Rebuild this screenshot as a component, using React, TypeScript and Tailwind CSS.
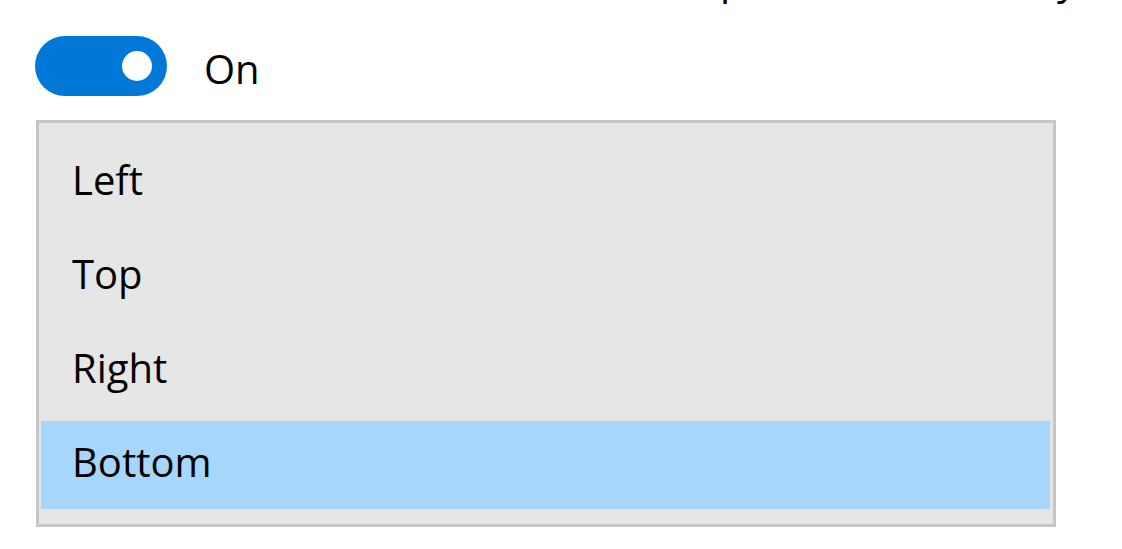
import { useState } from "react";

const sides = ["Left", "Top", "Right", "Bottom"];

export default function App() {
  const [on, setOn] = useState(true);
  const [selected, setSelected] = useState("Bottom");

  return (
    <div className="min-h-[549px] bg-white text-black font-['Open_Sans','Noto_Sans',sans-serif]">
      {/* clipped caption line from the section above */}
      <div className="h-[6px] overflow-hidden">
        <div className="-mt-[48px] flex whitespace-nowrap text-[40px] leading-[54px]">
          <span className="w-[696px] shrink-0" />
          <span>open</span>
          <span className="w-[180px] shrink-0" />
          <span>ready</span>
        </div>
      </div>

      <div className="flex items-center gap-[37px] pl-[35px] pt-[30px]">
        <button
          onClick={() => setOn(!on)}
          className={`flex h-[60px] w-[132px] items-center rounded-full px-[15px] ${
            on ? "justify-end bg-[#0078d7]" : "justify-start border-2 border-black bg-white"
          }`}
        >
          <span className={`h-[30px] w-[30px] rounded-full ${on ? "bg-white" : "bg-black"}`} />
        </button>
        <span className="pt-[5px] text-[40px] leading-[54px]">{on ? "On" : "Off"}</span>
      </div>

      <div className="ml-[36px] mt-[24px] w-[1020px] border-[3px] border-[#c6c6c6] bg-[#e6e6e6] pb-[15px] pl-[2px] pr-[3px] pt-[16px]">
        <ul className="flex flex-col gap-[6px]">
          {sides.map((s) => (
            <li
              key={s}
              onClick={() => setSelected(s)}
              className={`flex h-[88px] items-center pb-[6px] pl-[31px] text-[40px] ${
                selected === s ? "bg-[#a6d6fb]" : ""
              }`}
            >
              {s}
            </li>
          ))}
        </ul>
      </div>
    </div>
  );
}
